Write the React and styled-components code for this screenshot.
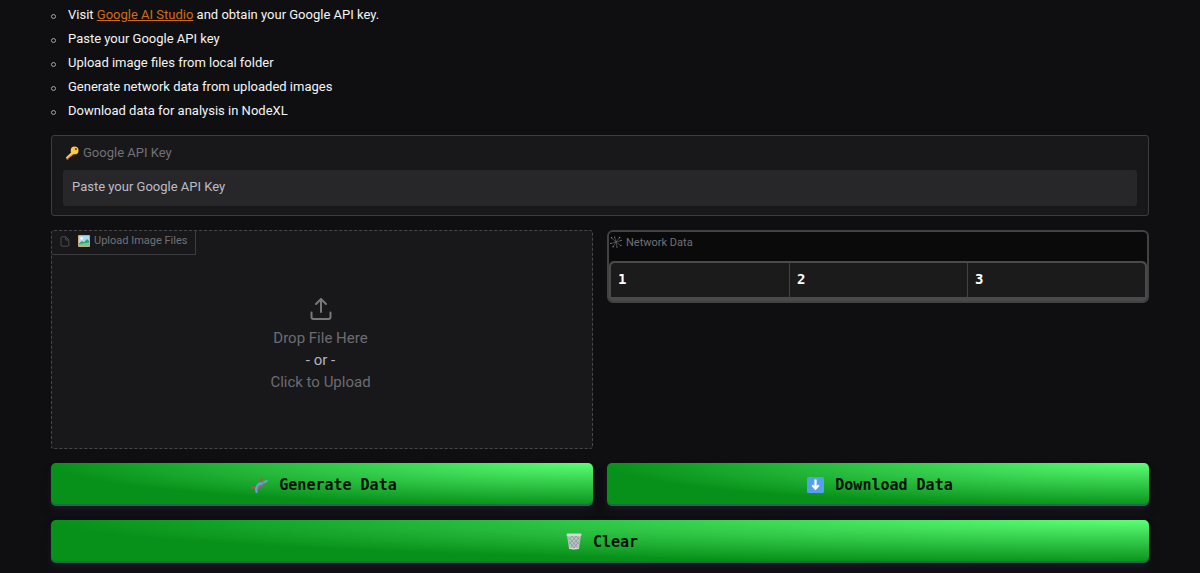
import React from 'react';
import styled, { createGlobalStyle } from 'styled-components';

const steps = [
  'Paste your Google API key',
  'Upload image files from local folder',
  'Generate network data from uploaded images',
  'Download data for analysis in NodeXL'
];

const columns = ['1', '2', '3'];

export default class App extends React.Component {

  state = {
    apiKey: ''
  }

  _onKeyChange = e => {
    this.setState({ apiKey: e.target.value });
  }

  _onClear = () => {
    this.setState({ apiKey: '' });
  }

  render() {
    return (
      <Page>
        <GlobalStyle />

        <Steps>
          <Step>
            Visit <Link href="https://aistudio.google.com/">Google AI Studio</Link> and obtain your Google API key.
          </Step>
          {steps.map(step => <Step key={step}>{step}</Step>)}
        </Steps>

        <Form>
          <Field>
            <FieldLabel htmlFor="api-key"><KeyIcon />Google API Key</FieldLabel>
            <TextInput
              id="api-key"
              placeholder="Paste your Google API Key"
              value={this.state.apiKey}
              onChange={this._onKeyChange}
            />
          </Field>

          <Columns>
            <DropZone htmlFor="image-files">
              <BlockLabel><FileIcon /><PictureIcon />Upload Image Files</BlockLabel>
              <UploadIcon />
              <span>Drop File Here</span>
              <Or>- or -</Or>
              <span>Click to Upload</span>
              <HiddenFile id="image-files" type="file" accept="image/*" multiple />
            </DropZone>

            <DataPanel>
              <DataTitle id="network-data"><NetworkIcon />Network Data</DataTitle>
              <TableFrame>
                <Table aria-labelledby="network-data">
                  <thead>
                    <tr>
                      {columns.map(name => <HeadCell key={name} scope="col">{name}</HeadCell>)}
                    </tr>
                  </thead>
                </Table>
              </TableFrame>
            </DataPanel>
          </Columns>

          <Columns>
            <ActionButton type="button"><DnaIcon />Generate Data</ActionButton>
            <ActionButton type="button"><DownloadIcon />Download Data</ActionButton>
          </Columns>
          <ActionButton type="button" onClick={this._onClear}><BinIcon />Clear</ActionButton>
        </Form>
      </Page>
    )
  }
}

const KeyIcon = () => (
  <svg width="14" height="14" viewBox="0 0 14 14" aria-hidden="true">
    <path d="M7.6 6.4 1.4 12.2v1.2h2v-1.3h1.3v-1.4h1.4l2.7-2.6z" fill="#e8962e" />
    <circle cx="9.6" cy="4.4" r="3.9" fill="#ffc93c" />
    <path d="M7.2 6.6 1.4 12" stroke="#ffd257" strokeWidth="1.6" />
    <circle cx="10.9" cy="3.1" r="1.1" fill="#6b4b1c" />
  </svg>
);

const FileIcon = () => (
  <svg width="10" height="11" viewBox="0 0 10 11" fill="none" stroke="#4c4c53" strokeLinejoin="round" aria-hidden="true">
    <path d="M2 .8h3.8l3 3v5.4a1 1 0 0 1-1 1H2a1 1 0 0 1-1-1V1.800a1 1 0 0 1 1-1z" />
    <path d="M5.700 1v3h3" />
  </svg>
);

const PictureIcon = () => (
  <svg width="12" height="12" viewBox="0 0 12 12" aria-hidden="true">
    <rect width="12" height="12" rx="1" fill="#c9ad82" />
    <rect x="1" y="1" width="10" height="10" fill="#a9dcf3" />
    <circle cx="3.600" cy="3.400" r="1.300" fill="#f7fcff" />
    <path d="M1 8.500 4 6l2 1.300L9 4l2 2v5H1z" fill="#3f9d6a" />
    <path d="M1 9.500c3-1.500 6-1 10-2V11H1z" fill="#6fc99c" />
  </svg>
);

const UploadIcon = () => (
  <svg width="22" height="22" viewBox="0 0 22 22" fill="none" stroke="#77777d" strokeWidth="2" strokeLinecap="round" strokeLinejoin="round" aria-hidden="true">
    <path d="M1.500 14.500v4.500a2 2 0 0 0 2 2h15a2 2 0 0 0 2-2v-4.500" />
    <path d="M6 6l5-5 5 5M11 1.300v12.700" />
  </svg>
);

const NetworkIcon = () => (
  <svg width="12" height="12" viewBox="0 0 12 12" stroke="#6d6d73" strokeWidth=".6" aria-hidden="true">
    <path d="M6 6 1.500 1.800M6 6 4.600 1M6 6l3.600-4.500M6 6l5-1.500M6 6l4.800 3.600M6 6l1 5M6 6l-2.800 4.600M6 6 1 7.400" />
    <g fill="#8f8f96" stroke="none">
      <circle cx="1.500" cy="1.800" r=".7" /><circle cx="4.600" cy="1" r=".6" /><circle cx="9.600" cy="1.500" r=".7" />
      <circle cx="11.100" cy="4.400" r=".6" /><circle cx="10.900" cy="9.600" r=".7" /><circle cx="7" cy="11.100" r=".6" />
      <circle cx="3.100" cy="10.700" r=".7" /><circle cx=".9" cy="7.400" r=".6" />
    </g>
  </svg>
);

const DnaIcon = () => (
  <svg width="17" height="16" viewBox="0 0 17 16" fill="none" strokeLinecap="round" aria-hidden="true">
    <path d="M4 10.500l1.500 2M6.800 7.500l2.400 2.400M8 6l3 2.800M11 3.200l2.500 2.600" stroke="#7c86b8" strokeWidth="1.400" />
    <path d="M1.200 10.800c2.800-1.300 4.800 1.200 7.300-.3 2.400-1.500.6-3.800 2-6.500" stroke="#c04b6c" strokeWidth="2.200" />
    <path d="M5.500 14.800c-.8-3.800.1-6 2.500-7.600 2.400-1.500 5.200-.4 7.600-3.400" stroke="#4fb0d2" strokeWidth="2.200" />
    <path d="M10.800 1.300c-.5 2.700.3 4.700 2.700 5.900" stroke="#ac5a4a" strokeWidth="1.800" />
    <path d="M7.800 7.300c1.200-.8 2.700-.8 4-1.200" stroke="#4fb0d2" strokeWidth="2" />
  </svg>
);

const DownloadIcon = () => (
  <svg width="17" height="16" viewBox="0 0 17 16" aria-hidden="true">
    <rect width="17" height="16" rx="1.500" fill="#55a0ea" />
    <path d="M8.500 2.500v9M5.300 8.300l3.200 3.400 3.200-3.400" fill="none" stroke="#fff" strokeWidth="2.200" />
  </svg>
);

const BinIcon = () => (
  <svg width="16" height="17" viewBox="0 0 16 17" aria-hidden="true">
    <path d="M1 2h14l-2 13.500q-5 1.500-10 0z" fill="#bcc6c5" />
    <path d="M2.500 4l9.500 11M6 3l7 8.500M10 3l4 4.500M2.700 8l6 7.500M13.500 4 4 15M10 3l-7 8.500M6 3 2.500 7M13.300 8l-6 7.500" stroke="#7f918c" strokeWidth=".7" />
    <rect x=".5" y=".5" width="15" height="2.500" rx="1" fill="#d2dad8" />
    <path d="M3 15.200q5 1.400 10 0" fill="none" stroke="#d2dad8" strokeWidth="1.300" />
  </svg>
);

const GlobalStyle = createGlobalStyle`
  *, *::before, *::after {
    box-sizing: border-box;
  }
  body {
    margin: 0;
    background: #0f0f11;
    color: #f4f4f5;
    font-family: Roboto, sans-serif;
  }
`

const Page = styled.main`
  display: flex;
  flex-direction: column;
  gap: 12px;
  padding: 3px 51px 9px;
`

const Form = styled.div`
  display: flex;
  flex-direction: column;
  gap: 14px;
`

const Steps = styled.ul`
  margin: 0;
  padding: 0 0 0 17px;
  list-style: none;
  font-size: 13px;
  line-height: 24px;
`

const Step = styled.li`
  display: flow-root;
  &::before {
    content: '';
    float: left;
    width: 5px;
    height: 5px;
    margin: 11px 0 0 -17px;
    border: 1px solid #a4a4a8;
    border-radius: 50%;
  }
`

const Link = styled.a`
  color: #d06c14;
  text-decoration: underline;
`

const Field = styled.div`
  display: flex;
  flex-direction: column;
  gap: 7px;
  padding: 7px 11px 9px;
  border: 1px solid #3c3c40;
  border-radius: 3px;
  background: #18181a;
`

const FieldLabel = styled.label`
  display: flex;
  align-items: center;
  gap: 4px;
  padding-left: 2px;
  color: #717178;
  font-size: 13px;
  line-height: 20px;
`

const TextInput = styled.input`
  width: 100%;
  height: 36px;
  padding: 0 9px 4px;
  border: none;
  border-radius: 3px;
  background: #27272a;
  color: #f4f4f5;
  font-family: inherit;
  font-size: 13px;
  &::placeholder {
    color: #bcbcc6;
    opacity: 1;
  }
`

const Columns = styled.div`
  display: grid;
  grid-template-columns: 1fr 1fr;
  gap: 14px;
  align-items: start;
`

const DropZone = styled.label`
  position: relative;
  display: flex;
  flex-direction: column;
  align-items: center;
  padding: 67px 3px 55px 0;
  border: 1px dashed #47474b;
  border-radius: 3px;
  background: #18181a;
  color: #6c6c73;
  font-size: 15px;
  line-height: 22px;
  cursor: pointer;
  svg + span {
    margin-top: 7px;
  }
`

const BlockLabel = styled.div`
  position: absolute;
  top: 0;
  left: 0;
  display: flex;
  align-items: center;
  height: 24px;
  padding: 0 8px 3px;
  border: 1px solid #3c3c40;
  border-width: 0 1px 1px 0;
  color: #717178;
  font-size: 11px;
  svg + svg {
    margin: 0 4px 0 8px;
  }
`

const Or = styled.span`
  color: #b4b4bd;
`

const HiddenFile = styled.input`
  position: absolute;
  width: 1px;
  height: 1px;
  opacity: 0;
`

const DataPanel = styled.section`
  overflow: hidden;
  border: 2px solid #424244;
  border-radius: 6px;
  background: #0a0a0a;
`

const DataTitle = styled.div`
  display: flex;
  align-items: center;
  gap: 4px;
  height: 29px;
  padding: 0 1px 9px;
  color: #717178;
  font-size: 11px;
`

const TableFrame = styled.div`
  padding: 2px 2px 4px;
  border-radius: 5px 5px 0 0;
  background: #4a4a4b;
`

const Table = styled.table`
  width: 100%;
  table-layout: fixed;
  border-spacing: 0;
  border-radius: 4px 4px 0 0;
  background: #1b1b1b;
`

const HeadCell = styled.th`
  height: 34px;
  padding: 0 7px 3px;
  color: #fff;
  font-family: 'DejaVu Sans Mono', monospace;
  font-size: 14px;
  font-weight: bold;
  text-align: left;
  & + & {
    border-left: 1px solid #424244;
  }
`

const ActionButton = styled.button`
  display: flex;
  align-items: center;
  justify-content: center;
  gap: 11px;
  height: 43px;
  padding: 0 16px 0 20px;
  border: none;
  border-radius: 5px;
  background: radial-gradient(100% 100% at 100% 0, #5aff75 0, #08911a 100%);
  box-shadow: rgba(45, 35, 66, .4) 0 2px 4px, rgba(45, 35, 66, .3) 0 7px 13px -3px, rgba(58, 65, 111, .5) 0 -2px 0 inset;
  color: #061008;
  font-family: 'DejaVu Sans Mono', monospace;
  font-size: 15px;
  font-weight: bold;
  cursor: pointer;
`
